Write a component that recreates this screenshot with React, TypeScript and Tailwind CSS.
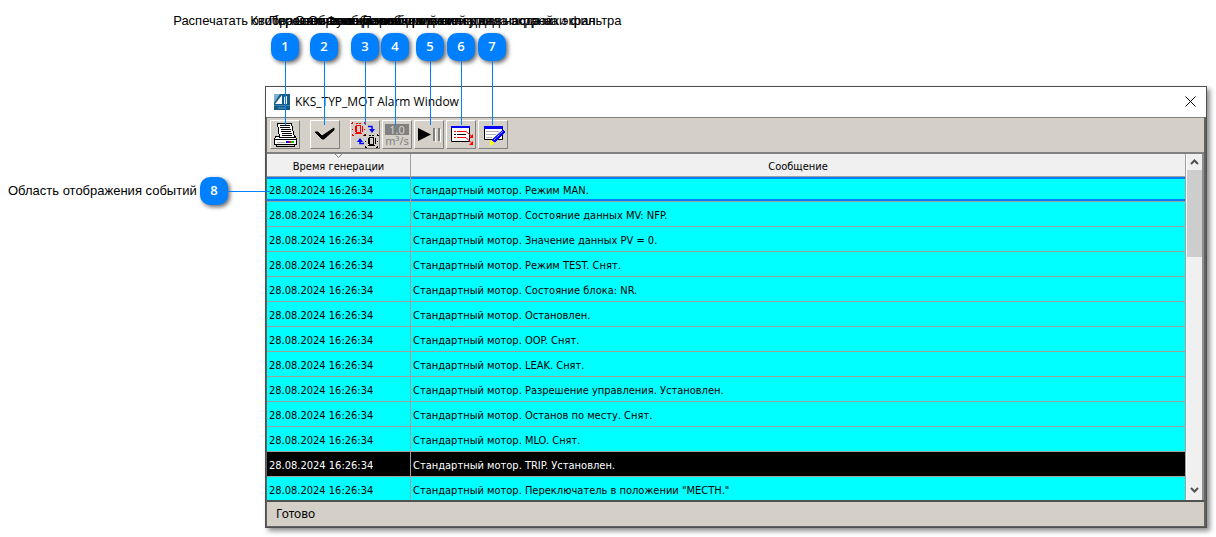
import clsx from 'clsx';

type ICallout = { id: number; text: string; position: string };

const callouts: ICallout[] = [
  { id: 1, text: 'Распечатать отображаемые события', position: 'left-[271px]' },
  { id: 2, text: 'Квитировать сообщения', position: 'left-[310px]' },
  { id: 3, text: 'Переключение режима мигания', position: 'left-[351px]' },
  { id: 4, text: 'Отображение значений сигналов', position: 'left-[381px]' },
  { id: 5, text: 'Остановка и обновление вывода экрана', position: 'left-[416px]' },
  { id: 6, text: 'Функция выбора полей для вывода на экран', position: 'left-[447px]' },
  { id: 7, text: 'Переход к диалогу для настройки фильтра', position: 'left-[478px]' },
];

const events = [
  { message: 'Стандартный мотор. Режим MAN.', state: 'focused' },
  { message: 'Стандартный мотор. Состояние данных MV: NFP.' },
  { message: 'Стандартный мотор. Значение данных PV = 0.' },
  { message: 'Стандартный мотор. Режим TEST. Снят.' },
  { message: 'Стандартный мотор. Состояние блока: NR.' },
  { message: 'Стандартный мотор. Остановлен.' },
  { message: 'Стандартный мотор. OOP. Снят.' },
  { message: 'Стандартный мотор. LEAK. Снят.' },
  { message: 'Стандартный мотор. Разрешение управления. Установлен.' },
  { message: 'Стандартный мотор. Останов по месту. Снят.' },
  { message: 'Стандартный мотор. MLO. Снят.' },
  { message: 'Стандартный мотор. TRIP. Установлен.', state: 'trip' },
  { message: 'Стандартный мотор. Переключатель в положении "МЕСТН."' },
];

const Icon = ({ children }: { children: React.ReactNode }) => (
  <svg width="28" height="28" viewBox="0 0 28 28" fill="none" className="shrink-0" aria-hidden="true">
    {children}
  </svg>
);

const PrinterIcon = () => (
  <Icon>
    <g shapeRendering="crispEdges">
      <path d="M4.500 15.500h20l1 3h-22z" fill="#fff" stroke="#000" />
      <path d="M6.500 2.500h14l3 14h-15z" fill="#fff" stroke="#000" />
      <path d="M9 4.500h10M9 6.500h10M10 8.500h10M10 10.500h10M11 12.500h10M11 14.500h10" stroke="#000" />
      <path d="M3.500 18.500h22v5h-22z" fill="#fff" stroke="#000" />
      <path d="M5.500 23.500h18v2h-18z" fill="#d4d0c8" stroke="#000" />
      <path d="M6 21.500h8" stroke="#b0b0b0" />
      <path d="M15 20h3v2h-3z" fill="#00f" />
      <path d="M18 20h2v2h-2z" fill="#f00" />
      <path d="M20 20h3v2h-3z" fill="#0c0" />
    </g>
  </Icon>
);

const CheckIcon = () => (
  <Icon>
    <path d="M4 11h3l4 4 12-8v2L13 18h-2z" fill="#000" stroke="#000" />
  </Icon>
);

const Lamp = ({ color, x, y }: { color: string; x: number; y: number }) => (
  <g transform={`translate(${x} ${y})`} stroke={color} shapeRendering="crispEdges">
    <path d="M4.500 2.500h4v7h-4z" fill="#d4d0c8" />
    <path d="M3 3v6M10 3v6M3 10.500h7" />
    <path d="M1 1l-1-1M0 6.500h1M1 12l-1 1M12 1l1-1M12 6.500h1M12 12l1 1M5 0v1M8 0v1" strokeWidth="1.500" />
  </g>
);

const LampsIcon = () => (
  <Icon>
    <Lamp color="#f00" x={1} y={2} />
    <Lamp color="#000" x={14} y={14} />
    <path d="M17 5.500h4v3" stroke="#00f" strokeWidth="1.500" />
    <path d="M18 8h6l-3 4z" fill="#00f" />
    <path d="M13 22.500H9V20" stroke="#00f" strokeWidth="1.500" />
    <path d="M6 21h6l-3-4z" fill="#00f" />
  </Icon>
);

const PlayPauseIcon = () => (
  <Icon>
    <path d="M3 7l13 6.500L3 20z" fill="#000" />
    <path d="M18 7h2v13h-2zM23 7h2v13h-2z" fill="#808080" />
    <path d="M20 8h1v13h-1zM25 8h1v13h-1z" fill="#fff" />
  </Icon>
);

const ListIcon = () => (
  <Icon>
    <path d="M4.500 5.500h18v15h-18z" fill="#fff" stroke="#000" />
    <path d="M4 5h19v2H4z" fill="#00f" />
    <path d="M7 10.500h2M7 16.500h2M10 10.500h9l6 5M10 16.500h9l6 6" stroke="#f00" />
    <path d="M7 13.500h2M10 13.500h9" stroke="#000" />
    <path d="M26 13v4h-4zM26 20v4h-4z" fill="#f00" />
  </Icon>
);

const EditIcon = () => (
  <Icon>
    <path d="M5.500 5.500h18v13h-18z" fill="#fff" stroke="#000" />
    <path d="M5 5h19v3H5z" fill="#00f" />
    <path d="M7 10.500h13M7 13.500h10M7 16.500h6" stroke="#b0b0b0" />
    <path d="M24 9l2 2-10 10-3-2z" fill="#00f" stroke="#00f" />
    <path d="M15 19l9-9" stroke="#fff" strokeDasharray="1 1" />
    <path d="M12 19l3 3-2 2h-2v-3z" fill="#ff0" />
  </Icon>
);

const Units = () => (
  <span className="flex flex-col items-center font-['Noto_Sans'] text-[11px] leading-[11px] text-[#808080]">
    <span className="h-[11px] w-6 bg-[#808080] text-[#d4d0c8]">1.0</span>
    <span>m³/s</span>
  </span>
);

const toolGroups = [
  [{ label: 'Печать', icon: <PrinterIcon /> }],
  [{ label: 'Квитировать', icon: <CheckIcon /> }],
  [
    { label: 'Индикация', icon: <LampsIcon /> },
    { label: 'Значения', icon: <Units /> },
    { label: 'Пуск/пауза', icon: <PlayPauseIcon /> },
    { label: 'Вывод', icon: <ListIcon /> },
    { label: 'Фильтр', icon: <EditIcon /> },
  ],
];

const Badge = ({ id }: { id: number }) => (
  <span className="flex h-7 w-7 shrink-0 items-center justify-center rounded-[10px] bg-[#0080ff] font-['Open_Sans'] text-[13px] font-semibold text-white shadow-[2px_2px_4px_rgba(0,0,0,0.6)]">
    {id}
  </span>
);

const Callout = ({ id, text, position }: ICallout) => (
  <div className={clsx('absolute top-[13px] z-10 flex w-7 flex-col items-center', position)}>
    <span className="mb-1 h-4 whitespace-nowrap leading-4">{text}</span>
    <Badge id={id} />
    <span className="h-16 w-px bg-[#0080ff]" />
  </div>
);

const TitleBar = () => (
  <header className="flex h-[30px] items-center bg-white pl-2 pr-[10px]">
    <svg width="16" height="16" viewBox="0 0 16 16" aria-hidden="true">
      <path d="M0 0h16v16H0z" fill="#135a85" />
      <path d="M0 0h6L0 9z" fill="#7fb2d0" />
      <path d="M8 1v9H1zM10 3l3-1v8h-3z" fill="#fff" />
      <path d="M0 11h16v1H0z" fill="#3f86ad" />
      <path d="M4 14h8" stroke="#5f9cc0" />
    </svg>
    <h1 className="ml-[5px] flex-1 font-['Open_Sans'] text-xs">KKS_TYP_MOT Alarm Window</h1>
    <button type="button" aria-label="Закрыть">
      <svg width="11" height="11" viewBox="0 0 11 11" className="mb-[2px]" aria-hidden="true">
        <path d="M.5.5l10 10M10.500.5l-10 10" stroke="#000" />
      </svg>
    </button>
  </header>
);

const Toolbar = () => (
  <div className="flex h-[35px] gap-[10px] border-t border-[#808080] bg-[#d4d0c8] pl-[3px] pt-[2px]">
    {toolGroups.map((group, i) => (
      <div key={i} className="flex gap-[2px]">
        {group.map((tool) => (
          <button
            key={tool.label}
            type="button"
            aria-label={tool.label}
            className="flex h-[29px] w-[30px] items-center justify-center border border-b-[#808080] border-l-white border-r-[#808080] border-t-white"
          >
            {tool.icon}
          </button>
        ))}
      </div>
    ))}
  </div>
);

const Chevron = ({ className }: { className?: string }) => (
  <svg width="9" height="6" viewBox="0 0 9 6" className={className} aria-hidden="true">
    <path d="M1 5l3.500-3.500L8 5" fill="none" stroke="#505050" strokeWidth="2" />
  </svg>
);

const ScrollBar = () => (
  <div className="flex w-[18px] flex-col border-l border-r-2 border-l-white border-r-[#909090] bg-[#f0f0f0]">
    <button type="button" aria-label="Вверх" className="flex h-4 items-center justify-center">
      <Chevron />
    </button>
    <div className="flex-1">
      <div className="h-[87px] bg-[#cdcdcd]" />
    </div>
    <button type="button" aria-label="Вниз" className="flex h-5 items-center justify-center">
      <Chevron className="rotate-180" />
    </button>
  </div>
);

const EventTable = () => (
  <table className="flex-1 table-fixed border-separate border-spacing-0 border-r border-[#a0a0a0] text-left">
    <colgroup>
      <col className="w-36" />
      <col />
    </colgroup>
    <thead>
      <tr className="bg-[#f0f0f0] text-center leading-[18px]">
        <th className="relative border-b border-r border-[#a0a0a0] p-0 pt-1 font-normal">
          <svg width="7" height="4" viewBox="0 0 7 4" className="absolute left-[68px] top-0" aria-hidden="true">
            <path d="M0 0l3.500 3.500L7 0" fill="none" stroke="#808080" />
          </svg>
          Время генерации
        </th>
        <th className="border-b border-[#a0a0a0] p-0 pt-1 font-normal">Сообщение</th>
      </tr>
    </thead>
    <tbody>
      {events.map(({ message, state }) => (
        <tr
          key={message}
          className={clsx(
            'group h-[25px] align-top leading-[18px] last:h-[23px]',
            state === 'trip' ? 'bg-black text-white' : 'bg-[#00ffff]',
            state === 'focused' && '*:shadow-[inset_0_2px_#0080ff,inset_0_-2px_#0080ff]'
          )}
        >
          <td className="border-b border-r border-[#a0a0a0] p-0 pl-[2px] pt-[5px] group-last:border-b-0">
            28.08.2024 16:26:34
          </td>
          <td className="border-b border-[#a0a0a0] p-0 pl-[2px] pt-[5px] group-last:border-b-0">{message}</td>
        </tr>
      ))}
    </tbody>
  </table>
);

const AlarmWindow = () => (
  <section className="border border-[#505050] shadow-[3px_3px_5px_rgba(0,0,0,0.45)]">
    <TitleBar />
    <div className="border-b border-l border-r-2 border-[#606460]">
      <Toolbar />
      <div className="flex border-t-2 border-[#808080] font-['DejaVu_Sans_Condensed'] text-[11px]">
        <EventTable />
        <ScrollBar />
      </div>
      <footer className="h-[26px] border-t-2 border-[#505050] bg-[#d4d0c8] pl-[9px] font-['Noto_Sans'] text-xs leading-6">
        Готово
      </footer>
    </div>
  </section>
);

const App = () => {
  return (
    <main className="relative min-h-screen bg-white pb-2 pl-[265px] pr-[9px] pt-[86px] font-['Liberation_Sans',sans-serif] text-[13px] text-black">
      {callouts.map((callout) => (
        <Callout key={callout.id} {...callout} />
      ))}
      <div className="absolute left-2 top-[177px] z-10 flex items-center">
        <span className="w-48 whitespace-nowrap">Область отображения событий</span>
        <Badge id={8} />
        <span className="h-px w-[42px] bg-[#0080ff]" />
      </div>
      <AlarmWindow />
    </main>
  );
};

export default App;
